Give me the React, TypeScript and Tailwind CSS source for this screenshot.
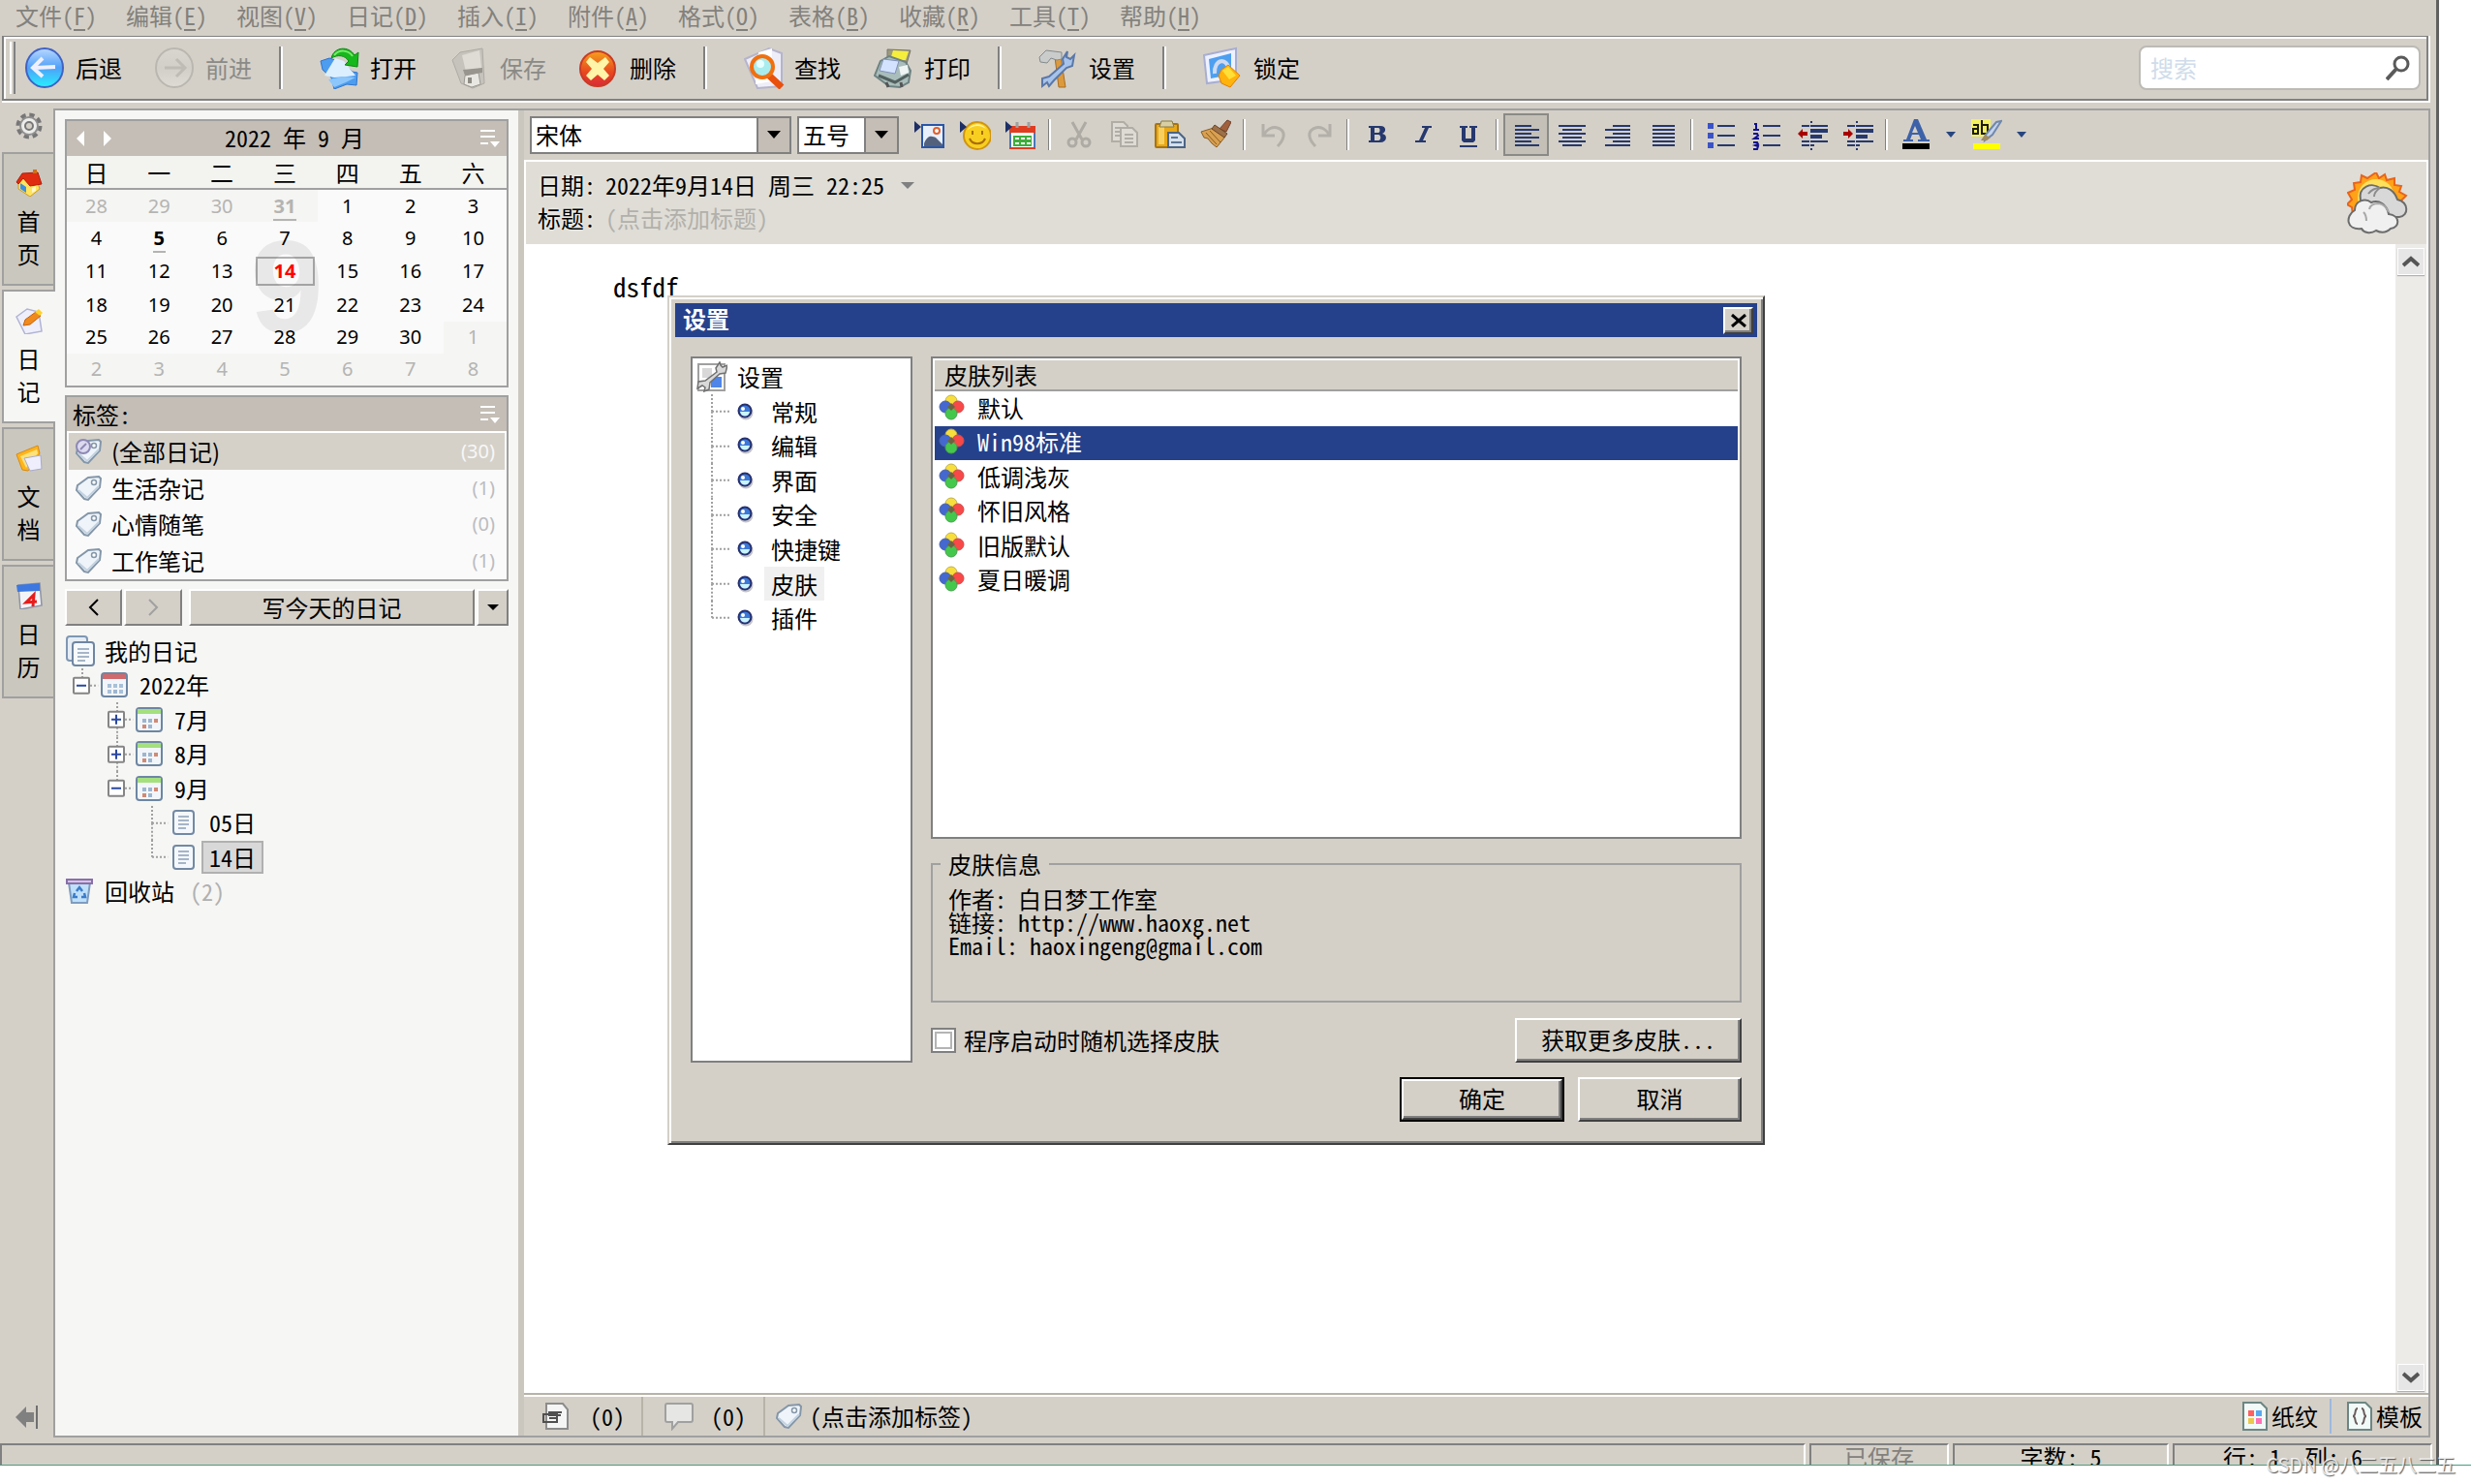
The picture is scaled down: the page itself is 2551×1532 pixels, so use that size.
import { useState } from "react";
import type { ReactNode } from "react";
import clsx from "clsx";

const MENUS = [
  ["文件", "F"],
  ["编辑", "E"],
  ["视图", "V"],
  ["日记", "D"],
  ["插入", "I"],
  ["附件", "A"],
  ["格式", "O"],
  ["表格", "B"],
  ["收藏", "R"],
  ["工具", "T"],
  ["帮助", "H"],
];

const WEEKDAYS = ["日", "一", "二", "三", "四", "五", "六"];

const WEEKS = [
  [28, 29, 30, 31, 1, 2, 3],
  [4, 5, 6, 7, 8, 9, 10],
  [11, 12, 13, 14, 15, 16, 17],
  [18, 19, 20, 21, 22, 23, 24],
  [25, 26, 27, 28, 29, 30, 1],
  [2, 3, 4, 5, 6, 7, 8],
];

const TAGS = [
  { name: "(全部日记)", count: 30 },
  { name: "生活杂记", count: 1 },
  { name: "心情随笔", count: 0 },
  { name: "工作笔记", count: 1 },
];

const PAGES = ["常规", "编辑", "界面", "安全", "快捷键", "皮肤", "插件"];
const SKINS = ["默认", "Win98标准", "低调浅灰", "怀旧风格", "旧版默认", "夏日暖调"];

/* ---------- toolbar icons ---------- */

function RoundArrowIcon({ back }: { back?: boolean }) {
  return (
    <svg viewBox="0 0 44 44" className="size-11">
      <defs>
        <linearGradient id={back ? "rb" : "rf"} x1="0" y1="0" x2="0" y2="1">
          <stop offset="0" stopColor={back ? "#b9d8ff" : "#d9d6cf"} />
          <stop offset="0.5" stopColor={back ? "#4fa0f8" : "#d2cfc8"} />
          <stop offset="1" stopColor={back ? "#25f0ff" : "#dedbd4"} />
        </linearGradient>
      </defs>
      <ellipse cx="20" cy="22" rx="19" ry="20" fill={`url(#${back ? "rb" : "rf"})`} stroke={back ? "#3f62c4" : "#bab7b0"} strokeWidth="2" />
      {back ? (
        <path d="M31 21l-21 1M18 12L8 22l10 9" fill="none" stroke="#eef0ff" strokeWidth="4" />
      ) : (
        <path d="M10 22h20M22 13l9 9-9 9" fill="none" stroke="#bfbcb5" strokeWidth="3" />
      )}
    </svg>
  );
}

function OpenIcon() {
  return (
    <svg viewBox="0 0 44 44" className="size-11">
      <path d="M1 15l9-3 6 2 9 3 9 9 5 1-1 13-10-1-13 5-3-12-9-8z" fill="#4c9df0" stroke="#2f74cc" />
      <path d="M5 30l11-18 9 3 12 15-9 1-13 1z" fill="#dcefff" />
      <path d="M9 34l16-3 12 1-10 5-12 5z" fill="#8cc6fb" />
      <path d="M12 12C15 0 30-1 36 9l4-3-1 15-13-2 4-4c-4-6-11-7-18-3z" fill="#16b81c" stroke="#0b8a10" />
      <path d="M15 9c5-6 14-6 19 1" fill="none" stroke="#7bea6d" strokeWidth="2" />
    </svg>
  );
}

function SaveIcon() {
  return (
    <svg viewBox="0 0 44 44" className="size-11">
      <path d="M3 14L11 6l23-4 2 36-12 5-12-5z" fill="#c6c3bc" stroke="#aeaba4" />
      <path d="M13 9l18-5 2 18-16 4z" fill="#dfdcd6" />
      <path d="M16 30l14-3 2 12-9 3-8-3z" fill="#e9e7e2" stroke="#9d9a94" />
      <path d="M14 24l20-2v5l-18 3z" fill="#98958f" />
      <path d="M19 32h4v6h-4z" fill="#8f8c86" />
    </svg>
  );
}

function DeleteIcon() {
  return (
    <svg viewBox="0 0 44 44" className="size-11">
      <defs>
        <linearGradient id="del" x1="0" y1="0" x2="0" y2="1">
          <stop offset="0" stopColor="#f5a01c" />
          <stop offset="0.6" stopColor="#e8471f" />
          <stop offset="1" stopColor="#d92a3a" />
        </linearGradient>
      </defs>
      <circle cx="19" cy="23" r="18" fill="url(#del)" stroke="#c93b24" strokeWidth="2" />
      <path d="M11 11l8 6 8-6 4 5-6 7 6 7-5 5-7-6-7 6-5-5 6-7-6-7z" fill="#fff4a8" />
    </svg>
  );
}

function FindIcon() {
  return (
    <svg viewBox="0 0 44 44" className="size-11">
      <path d="M1 13L26 2l13 5v34l-25 2z" fill="#eeeef8" stroke="#b5b4cc" strokeWidth="2" />
      <path d="M15 6l14-4-1 34-16 3z" fill="#fff" />
      <path d="M26 30l13 12" stroke="#e8500c" strokeWidth="7" />
      <circle cx="19" cy="21" r="11" fill="#a9ecee" stroke="#f07010" strokeWidth="4" />
      <circle cx="17" cy="18" r="4" fill="#e8ffff" />
    </svg>
  );
}

function PrintIcon() {
  return (
    <svg viewBox="0 0 44 44" className="size-11">
      <path d="M14 3l24 1-4 14-20-3z" fill="#9c9a7c" stroke="#77766a" />
      <path d="M20 4l16 1-3 9H17z" fill="#f5ee3c" />
      <path d="M7 15l9-5 17 6 5 9-2 12-9 5-11-1L1 30z" fill="#a9bdbb" stroke="#6d8280" strokeWidth="2" />
      <path d="M10 13l16 2-4 13-16-3z" fill="#d3e2ff" stroke="#8290b8" />
      <path d="M5 30l17 7 14-8" fill="none" stroke="#52615f" strokeWidth="3" />
      <path d="M26 21l9-2 1 8-8 3z" fill="#eef5f4" />
      <path d="M13 37l2 5M28 37l1 5" stroke="#555" strokeWidth="3" />
    </svg>
  );
}

function ToolsIcon() {
  return (
    <svg viewBox="0 0 44 44" className="size-11">
      <path d="M17 11l6-1 5 32h-7z" fill="#dc9a3e" stroke="#a86c22" />
      <path d="M1 11l7-7 16 2v7l-5 1-6-2-4 5-7-1z" fill="#c9cccb" stroke="#858a8b" />
      <path d="M30 5l-5 8 1 5-15 13-7 2v8l5-4 2 4 5-6 13-13 6-2 2-11-4 4-4-2z" fill="#a8c3ea" stroke="#5b78a8" strokeWidth="2" />
    </svg>
  );
}

function LockIcon() {
  return (
    <svg viewBox="0 0 44 44" className="size-11">
      <path d="M1 9l33-7v32L4 38z" fill="#eef1ff" stroke="#a8aed0" strokeWidth="2" />
      <path d="M6 13l23-6v22L8 33z" fill="#4e9ff0" />
      <path d="M12 28c-1-15 13-18 15-3" fill="none" stroke="#cfdaf2" strokeWidth="4" />
      <path d="M19 24l7-5 12 11-10 12-9-4-3-8z" fill="#ffb30c" stroke="#e07f08" />
      <path d="M20 25l6-4 8 9-7 4z" fill="#ffdf38" />
    </svg>
  );
}

/* ---------- side bar icons ---------- */

function GearIcon() {
  return (
    <svg viewBox="0 0 28 28" className="size-7">
      <circle cx="14" cy="14" r="11" fill="none" stroke="#777" strokeWidth="5" strokeDasharray="5 3.64" />
      <circle cx="14" cy="14" r="9" fill="#ececea" stroke="#909090" strokeWidth="2" />
      <circle cx="14" cy="14" r="4" fill="#d4d0c8" stroke="#777" strokeWidth="2" />
    </svg>
  );
}

function HomeIcon() {
  return (
    <svg viewBox="0 0 28 28" className="size-7">
      <path d="M3 14l6-6 14 6 2 6-10 8-12-8z" fill="#ffe45c" stroke="#d09a28" />
      <path d="M5 14l6 4v6l-6-4z" fill="#3c8fe0" />
      <path d="M17 19l4-2v5l-4 2z" fill="#fff6c8" />
      <path d="M1 13L7 4l16-1 4 12-12 2-7-8-5 6z" fill="#e02c10" stroke="#b51c08" />
      <path d="M18 4V0h4v4z" fill="#d07018" />
    </svg>
  );
}

function DiaryIcon() {
  return (
    <svg viewBox="0 0 28 28" className="size-7">
      <path d="M1 10L12 2l12 3 3 20-17 3z" fill="#eeeffb" stroke="#b0b4d4" strokeWidth="1.5" />
      <path d="M8 19l2-6L21 5l5 4-11 9z" fill="#f08a1c" stroke="#c8600c" />
      <path d="M20 5l4-3 4 4-3 3z" fill="#ffd22c" />
    </svg>
  );
}

function DocsIcon() {
  return (
    <svg viewBox="0 0 28 28" className="size-7">
      <path d="M1 10L23 1l2 8-12 18-6-1z" fill="#ffb41c" stroke="#d88a10" />
      <path d="M5 12l17-7 1 4-12 15z" fill="#ffe27a" />
      <path d="M9 14l17-3 1 14-12 2z" fill="#eeeefc" stroke="#a9aace" />
    </svg>
  );
}

function DateIcon() {
  return (
    <svg viewBox="0 0 28 28" className="size-7">
      <path d="M3 3l22-2 2 23-22 4z" fill="#f4f4f8" stroke="#8d94a6" strokeWidth="1.5" />
      <path d="M1 3l24-2v8L2 10z" fill="#3c78e0" />
      <path d="M18 25l1-12-8 8 11-1" fill="none" stroke="#e81c1c" strokeWidth="3" />
    </svg>
  );
}

/* ---------- panel icons ---------- */

function MenuLinesIcon() {
  return (
    <svg viewBox="0 0 22 20" className="h-5 w-[22px]">
      <path d="M1 2h15M1 8h15M1 15h8" stroke="#fff" strokeWidth="2" />
      <path d="M11 13h10l-5 6z" fill="#fff" />
    </svg>
  );
}

function TagIcon({ all }: { all?: boolean }) {
  return (
    <svg viewBox="0 0 28 28" className="size-7 shrink-0">
      <path d="M3 11L14 3l11-1 2 2-1 9-12 13-4-1-8-9z" fill="#eef4fa" stroke="#8496a8" strokeWidth="2" />
      <path d="M4 16l9 8 12-12" fill="none" stroke="#c3d2e0" strokeWidth="2" />
      <circle cx="20" cy="8" r="2.5" fill="#fff" stroke="#8496a8" strokeWidth="1.5" />
      {all && (
        <>
          <circle cx="9" cy="9" r="7" fill="#dcdaf0" stroke="#8d88b4" strokeWidth="2" />
          <path d="M6 12l6-6" fill="none" stroke="#8d88b4" strokeWidth="2" />
        </>
      )}
    </svg>
  );
}

function BookIcon() {
  return (
    <svg viewBox="0 0 30 32" className="h-8 w-[30px]">
      <rect x="1" y="1" width="21" height="25" rx="3" fill="#e6edf5" stroke="#7e97b3" strokeWidth="2" />
      <rect x="7" y="7" width="22" height="24" rx="3" fill="#f7fafd" stroke="#6f86a2" strokeWidth="2" />
      <path d="M12 14h12M12 18h12M12 22h12M12 26h8" stroke="#8c9fb5" strokeWidth="1.5" />
    </svg>
  );
}

function CalendarIcon({ year }: { year?: boolean }) {
  return (
    <svg viewBox="0 0 28 28" className="size-7">
      <rect x="1" y="2" width="26" height="24" rx="3" fill="#f2f6fa" stroke="#6d86a2" strokeWidth="2" />
      <path d="M2 3h24v5H2z" fill={year ? "#d06a6c" : "#a4e07e"} />
      <path d="M7 13h4v4H7zM13 13h4v4h-4zM7 19h4v4H7z" fill={year ? "#a9c0d8" : "#9db6d0"} />
      <path d="M19 13h4v4h-4z" fill={year ? "#a9c0d8" : "#d08a74"} />
      <path d="M13 19h4v4h-4z" fill="#9db6d0" />
      {year ? <path d="M19 19h4v4h-4z" fill="#a9c0d8" /> : <path d="M7 19h4v4H7z" fill="#d08a74" />}
    </svg>
  );
}

function NoteIcon() {
  return (
    <svg viewBox="0 0 28 28" className="size-7">
      <rect x="3" y="2" width="21" height="24" rx="3" fill="#f4f8fc" stroke="#7289a4" strokeWidth="2" />
      <path d="M8 8h11M8 12h11M8 16h11M8 20h8" stroke="#8c9fb5" strokeWidth="1.5" />
    </svg>
  );
}

function BinIcon() {
  return (
    <svg viewBox="0 0 28 28" className="size-7">
      <path d="M3 5h22l-3 21H6z" fill="#bfe0fa" stroke="#7f9cc0" strokeWidth="2" />
      <path d="M1 2h26v4H1z" fill="#d6c4e8" stroke="#8870a8" strokeWidth="2" />
      <path d="M11 14l3-4 3 4M19 16l1 4h-4M12 20H8l1-4" fill="none" stroke="#3c7cc8" strokeWidth="2.5" />
    </svg>
  );
}

/* Guide lines of a tree view, with an optional expander box. */
function TreeCell({ up = true, down, sign, wide }: { up?: boolean; down?: boolean; sign?: "+" | "-"; wide?: boolean }) {
  return (
    <svg className={clsx("h-full shrink-0", wide ? "w-10" : "w-9")}>
      <g stroke="#a0a0a0" strokeWidth="2" strokeDasharray="2 2">
        {up && <line x1="50%" y1="0" x2="50%" y2="50%" />}
        {down && <line x1="50%" y1="50%" x2="50%" y2="100%" />}
        <line x1="50%" y1="50%" x2="95%" y2="50%" />
      </g>
      {sign && (
        <svg x="50%" y="50%" overflow="visible">
          <rect x="-9" y="-8" width="16" height="16" rx="1" fill="#fff" stroke="#858585" strokeWidth="2" />
          <path d={sign === "+" ? "M-6 0H4M-1-5V5" : "M-6 0H4"} stroke="#2a48a0" strokeWidth="2" />
        </svg>
      )}
    </svg>
  );
}

/* ---------- main tool bar ---------- */

function ToolButton({ icon, label, disabled }: { icon: ReactNode; label: string; disabled?: boolean }) {
  return (
    <button disabled={disabled} className={clsx("flex h-12 w-[134px] items-center gap-2 pl-2.5", disabled && "text-[#8a8a86]")}>
      {icon}
      <span>{label}</span>
    </button>
  );
}

function ToolSeparator() {
  return <div className="mr-7 ml-1 h-11 w-1 border-r-2 border-l-2 border-r-white border-l-[#808080]" />;
}

function MainToolbar() {
  return (
    <div className="mr-1.5 ml-0.5 border-r-2 border-b-2 border-white">
      <div className="flex h-[67px] items-center border-2 border-t border-[#808080] shadow-[inset_2px_2px_0_#fff]">
        <div className="ml-1.5 h-[54px] w-1.5 border-r-2 border-l-2 border-r-[#808080] border-l-white" />
        <ToolButton icon={<RoundArrowIcon back />} label="后退" />
        <ToolButton icon={<RoundArrowIcon />} label="前进" disabled />
        <ToolSeparator />
        <ToolButton icon={<OpenIcon />} label="打开" />
        <ToolButton icon={<SaveIcon />} label="保存" disabled />
        <ToolButton icon={<DeleteIcon />} label="删除" />
        <ToolSeparator />
        <ToolButton icon={<FindIcon />} label="查找" />
        <ToolButton icon={<PrintIcon />} label="打印" />
        <ToolSeparator />
        <ToolButton icon={<ToolsIcon />} label="设置" />
        <ToolSeparator />
        <ToolButton icon={<LockIcon />} label="锁定" />
        <label className="mr-1.5 ml-auto flex h-[46px] w-[291px] items-center rounded-lg border-2 border-[#bcbab5] bg-white pr-2 pl-2.5">
          <input aria-label="搜索" placeholder="搜索" className="min-w-0 flex-1 outline-none placeholder:text-[#cfdcea]" />
          <svg viewBox="0 0 26 26" className="size-[26px]">
            <circle cx="16" cy="9" r="7" fill="none" stroke="#5a5a5a" strokeWidth="3" />
            <path d="M11 14L1 25" stroke="#5a5a5a" strokeWidth="4" />
          </svg>
        </label>
      </div>
    </div>
  );
}

/* ---------- left side ---------- */

function SideTab({ icon, label, active, onClick }: { icon: ReactNode; label: string; active: boolean; onClick: () => void }) {
  return (
    <button
      onClick={onClick}
      className={clsx(
        "ml-0.5 flex h-[138px] flex-col items-center border-2 border-r-0 border-[#a0a0a0] pt-4",
        active ? "relative z-10 -mr-0.5 bg-[#f6f6f4] pr-0.5" : "bg-[#cac7be]"
      )}
    >
      {icon}
      <span className="mt-2 w-6 leading-[34px] break-all">{label}</span>
    </button>
  );
}

function SideTabs() {
  const [active, setActive] = useState("日记");
  const tabs = [
    { label: "首页", icon: <HomeIcon /> },
    { label: "日记", icon: <DiaryIcon /> },
    { label: "文档", icon: <DocsIcon /> },
    { label: "日历", icon: <DateIcon /> },
  ];
  return (
    <nav className="flex w-[55px] shrink-0 flex-col">
      <button aria-label="选项" className="flex h-[45px] items-start justify-center pt-1 pl-1">
        <GearIcon />
      </button>
      <div className="flex flex-col gap-1">
        {tabs.map((tab) => (
          <SideTab key={tab.label} {...tab} active={tab.label === active} onClick={() => setActive(tab.label)} />
        ))}
      </div>
      <button aria-label="收起" className="mt-auto mb-2 ml-4 w-6">
        <svg viewBox="0 0 24 26" className="h-[26px] w-6">
          <path d="M0 13L11 2v6h8v10h-8v6z" fill="#808080" />
          <path d="M22 1v24" stroke="#707070" strokeWidth="2" />
        </svg>
      </button>
    </nav>
  );
}

function MonthCalendar() {
  return (
    <section className="border-2 border-[#a0a0a0] bg-[#fafafa]">
      <div className="flex h-9 items-center justify-between bg-[#c4beb6] pr-1.5 pl-2.5">
        <div className="flex w-10 gap-5">
          <button aria-label="上个月" className="border-y-8 border-r-8 border-y-transparent border-r-white" />
          <button aria-label="下个月" className="border-y-8 border-l-8 border-y-transparent border-l-white" />
        </div>
        <span className="pb-0.5 pl-3 whitespace-pre">2022 年 9 月</span>
        <button aria-label="日历菜单" className="flex w-10 justify-end">
          <MenuLinesIcon />
        </button>
      </div>
      <div className="relative">
        <table className="h-[237px] w-full table-fixed border-collapse text-center">
          <thead>
            <tr className="h-[34px] border-b-2 border-[#a0a0a0] bg-[#f3f3f0]">
              {WEEKDAYS.map((d) => (
                <th key={d} className="p-0 pr-1 leading-8 font-normal">{d}</th>
              ))}
            </tr>
          </thead>
          <tbody className="font-[family-name:'Noto_Sans',sans-serif] text-[20px] leading-7">
            {WEEKS.map((week, w) => (
              <tr key={w}>
                {week.map((day, i) => {
                  const other = (w === 0 && day > 20) || (w > 3 && day < 15);
                  const written = (w === 0 && day === 31) || (w === 1 && day === 5);
                  const today = w === 2 && day === 14;
                  return (
                    <td key={i} className={clsx("p-0 pr-1", other && "bg-[#f5f5f3] text-[#b4b4b2]")}>
                      <span
                        className={clsx(
                          written && "border-b-2 border-[#b4b4b2] px-px font-bold",
                          today && "mx-auto block h-[30px] w-[61px] border-2 border-[#b0b0b0] leading-[26px] font-bold text-[#f00]"
                        )}
                      >
                        {day}
                      </span>
                    </td>
                  );
                })}
              </tr>
            ))}
          </tbody>
        </table>
        <div
          aria-hidden
          className="pointer-events-none absolute inset-x-0 top-[80px] text-center font-[family-name:'Liberation_Sans',sans-serif] text-[136px] leading-[110px] font-bold text-black/7"
        >
          9
        </div>
      </div>
    </section>
  );
}

function TagList() {
  return (
    <section className="mt-2 border-2 border-[#a0a0a0] bg-[#fafafa]">
      <div className="flex h-[35px] items-center justify-between bg-[#c4beb6] pr-1.5 pl-1.5">
        <h2>标签:</h2>
        <button aria-label="标签菜单">
          <MenuLinesIcon />
        </button>
      </div>
      <ul className="grid h-[153px] grid-rows-4 border-t-2 border-white px-0.5">
        {TAGS.map((tag, i) => (
          <li key={tag.name} className={clsx("flex", i === 0 && "bg-[#d5d1c9]")}>
            <button className="flex flex-1 items-center gap-2.5 pr-2.5 pl-1.5 text-left">
              <TagIcon all={i === 0} />
              <span className="flex-1 font-[family-name:'Noto_Sans_CJK_SC',sans-serif]">{tag.name}</span>
              <span className={clsx("font-[family-name:'Noto_Sans',sans-serif] text-[20px]", i === 0 ? "text-[#f7f7f7]" : "text-[#bcbcc0]")}>
                ({tag.count})
              </span>
            </button>
          </li>
        ))}
      </ul>
    </section>
  );
}

function TreeItem({ cells, icon, label, selected, count }: { cells?: ReactNode; icon: ReactNode; label: string; selected?: boolean; count?: number }) {
  return (
    <li className="flex items-center">
      {cells}
      <span className="ml-px flex w-[30px] shrink-0 items-center">{icon}</span>
      <button className={clsx("ml-0.5 border-2 px-1.5 leading-[30px]", selected ? "border-[#b0b0b0] bg-[#d8d8d8]" : "border-transparent")}>{label}</button>
      {count !== undefined && <span className="ml-2 text-[#b0b0b0]">({count})</span>}
    </li>
  );
}

function DiaryTree() {
  const gap = <span className="w-9 shrink-0" />;
  return (
    <ul className="mt-2 grid h-[284px] grid-rows-8">
      <TreeItem icon={<BookIcon />} label="我的日记" />
      <TreeItem cells={<TreeCell sign="-" />} icon={<CalendarIcon year />} label="2022年" />
      <TreeItem cells={<>{gap}<TreeCell sign="+" down /></>} icon={<CalendarIcon />} label="7月" />
      <TreeItem cells={<>{gap}<TreeCell sign="+" down /></>} icon={<CalendarIcon />} label="8月" />
      <TreeItem cells={<>{gap}<TreeCell sign="-" /></>} icon={<CalendarIcon />} label="9月" />
      <TreeItem cells={<>{gap}{gap}<TreeCell down /></>} icon={<NoteIcon />} label="05日" />
      <TreeItem cells={<>{gap}{gap}<TreeCell /></>} icon={<NoteIcon />} label="14日" selected />
      <TreeItem icon={<BinIcon />} label="回收站" count={2} />
    </ul>
  );
}

function LeftPanel() {
  const btn = "flex items-center justify-center border-2 border-t-white border-r-[#808080] border-b-[#808080] border-l-white bg-[#d4d0c8]";
  return (
    <aside className="w-[478px] shrink-0 bg-[#f6f6f4] px-2.5 pt-[9px]">
      <MonthCalendar />
      <TagList />
      <div className="mt-2 flex h-[38px]">
        <button aria-label="前一篇" className={clsx(btn, "w-[59px]")}>
          <svg viewBox="0 0 12 18" className="h-[18px] w-3"><path d="M10 1L2 9l8 8" fill="none" stroke="#000" strokeWidth="2" /></svg>
        </button>
        <button aria-label="后一篇" className={clsx(btn, "ml-0.5 w-[60px]")}>
          <svg viewBox="0 0 12 18" className="h-[18px] w-3"><path d="M2 1l8 8-8 8" fill="none" stroke="#a0a0a0" strokeWidth="2" /></svg>
        </button>
        <button className={clsx(btn, "ml-[7px] flex-1")}>写今天的日记</button>
        <button aria-label="更多" className={clsx(btn, "ml-0.5 w-[33px]")}>
          <span className="border-x-[6px] border-t-[6px] border-x-transparent border-t-black" />
        </button>
      </div>
      <DiaryTree />
    </aside>
  );
}

/* ---------- editor ---------- */

function FormatSeparator() {
  return <div className="mx-[5px] h-8 w-[3px] border-r-2 border-l border-r-white border-l-[#808080]" />;
}

function FormatButton({ label, active, children }: { label: string; active?: boolean; children: ReactNode }) {
  return (
    <button
      aria-label={label}
      className={clsx("flex h-11 w-[47px] items-center justify-center", active && "border-2 border-[#8a8a86] bg-[#c4c0b8]")}
    >
      <svg viewBox="0 0 32 32" className="size-8 shrink-0">{children}</svg>
    </button>
  );
}

function DropArrow({ label }: { label: string }) {
  return (
    <button aria-label={label} className="flex h-11 w-[26px] items-center justify-center">
      <span className="border-x-[5px] border-t-[6px] border-x-transparent border-t-[#27457e]" />
    </button>
  );
}

function Combo({ label, value, className }: { label: string; value: string; className: string }) {
  return (
    <label className={clsx("flex h-[39px] border-2 border-[#808080] bg-white", className)}>
      <select aria-label={label} className="min-w-0 flex-1 appearance-none pl-1 outline-none">
        <option>{value}</option>
      </select>
      <span className="flex w-[34px] items-center justify-center border-l-2 border-[#808080] bg-[#c4beb6]">
        <span className="border-x-[7px] border-t-[8px] border-x-transparent border-t-black" />
      </span>
    </label>
  );
}

const flag = <path d="M0 2l7 6-7 6z" fill="#1e2f66" />;

function FormatBar() {
  return (
    <div className="flex h-[53px] items-center border-b-2 border-white pb-px pl-1.5">
      <Combo label="字体" value="宋体" className="w-[270px]" />
      <Combo label="字号" value="五号" className="mr-2 ml-1.5 w-[105px]" />
      <FormatButton label="图片">
        {flag}
        <rect x="8" y="6" width="22" height="23" fill="#e8f0fc" stroke="#2a56a8" strokeWidth="2" />
        <path d="M10 25c4-10 9-7 12-6l7 7v2H10z" fill="#54617c" />
        <circle cx="23" cy="12" r="3" fill="#fff" stroke="#e0602c" strokeWidth="2" />
      </FormatButton>
      <FormatButton label="表情">
        <circle cx="18" cy="17" r="14" fill="#f8cf20" stroke="#d09410" strokeWidth="2" />
        <path d="M8 11c4-7 15-8 19-1-6-4-13-4-19 1z" fill="#fff2a0" />
        <path d="M13 12v4M23 12v4" stroke="#a86c08" strokeWidth="2" />
        <path d="M10 20c3 7 13 7 16 0" fill="none" stroke="#a86c08" strokeWidth="2" />
        {flag}
      </FormatButton>
      <FormatButton label="日期">
        <rect x="5" y="8" width="25" height="22" fill="#fff" stroke="#4878b8" strokeWidth="2" />
        <path d="M4 7h27v7H4zM4 29h27v2H4z" fill="#e03c20" />
        <rect x="8" y="17" width="19" height="11" fill="#3fae3c" />
        <path d="M10 20h4m2 0h4m2 0h4M10 25h4m2 0h4m2 0h4" stroke="#fff" strokeWidth="2" />
        <path d="M12 3v6M24 3v6" stroke="#a0a0a0" strokeWidth="3" />
        {flag}
      </FormatButton>
      <FormatSeparator />
      <FormatButton label="剪切">
        <g fill="none" stroke="#aeaba4" strokeWidth="3">
          <path d="M9 3l10 18M23 3L13 21" />
          <circle cx="9" cy="24" r="4" />
          <circle cx="23" cy="24" r="4" />
        </g>
      </FormatButton>
      <FormatButton label="复制">
        <g fill="#dedbd5" stroke="#b0ada6" strokeWidth="2">
          <path d="M3 3h12l4 4v16H3z" />
          <path d="M12 9h12l5 5v14H12z" />
          <path d="M6 9h5M6 13h5M6 17h5M16 16h9M16 20h9M16 24h9" />
        </g>
      </FormatButton>
      <FormatButton label="粘贴">
        <rect x="1" y="5" width="23" height="24" rx="1" fill="#e8a818" stroke="#a87410" strokeWidth="2" />
        <path d="M4 8h6v18H4z" fill="#f8d060" />
        <path d="M7 2h11l2 6H5z" fill="#d8cfa4" stroke="#8a7a3c" />
        <path d="M14 14h11l6 6v9H14z" fill="#d5e0ec" stroke="#4c6484" strokeWidth="2" />
        <path d="M17 19h7M17 24h11" stroke="#5c7494" strokeWidth="2" />
      </FormatButton>
      <FormatButton label="格式刷">
        <path d="M20 10l8-9 4 2-5 10z" fill="#a0603c" stroke="#70402c" />
        <path d="M1 13l13-4 12 9-9 11-5-4-4-5-4-1z" fill="#d8a050" stroke="#8a5c24" />
        <path d="M6 14l11 12M10 12l11 12" stroke="#8a5c24" />
        <path d="M15 6l13 9-3 4-13-9z" fill="#9c7048" stroke="#6c4424" />
      </FormatButton>
      <FormatSeparator />
      <FormatButton label="撤销">
        <path d="M5 5v12h12M6 16C12 4 28 8 26 18c-1 5-4 8-6 10" fill="none" stroke="#b3b0a9" strokeWidth="3" />
      </FormatButton>
      <FormatButton label="重做">
        <path d="M27 5v12H15M26 16C20 4 4 8 6 18c1 5 4 8 6 10" fill="none" stroke="#b3b0a9" strokeWidth="3" />
      </FormatButton>
      <FormatSeparator />
      <FormatButton label="加粗">
        <path d="M7 7h12c7 0 6 7 2 8 6 1 5 9-2 9H7v-2h2V9H7zm6 2v5h4c2 0 2-5 0-5zm0 7v6h4c3 0 3-6 0-6z" fill="#26386e" fillRule="evenodd" />
      </FormatButton>
      <FormatButton label="斜体">
        <path d="M15 7h10v2h-3l-6 13h3v2H8v-2h4l6-13h-3z" fill="#26386e" />
      </FormatButton>
      <FormatButton label="下划线">
        <path d="M7 7h8v2h-2v11h6V9h-2V7h8v2h-2v13l-2 2H11l-2-2V9H7zM7 27h18v2H7z" fill="#26386e" />
      </FormatButton>
      <FormatSeparator />
      <FormatButton label="左对齐" active>
        <path d="M4 7h17M4 11h25M4 15h17M4 19h25M4 23h17M4 27h25" stroke="#26386e" strokeWidth="2" />
      </FormatButton>
      <FormatButton label="居中">
        <path d="M2 7h28M6 11h20M2 15h28M6 19h20M2 23h28M6 27h20" stroke="#26386e" strokeWidth="2" />
      </FormatButton>
      <FormatButton label="右对齐">
        <path d="M11 7h18M3 11h26M11 15h18M3 19h26M11 23h18M3 27h26" stroke="#26386e" strokeWidth="2" />
      </FormatButton>
      <FormatButton label="两端对齐">
        <path d="M5 7h23M5 11h23M5 15h23M5 19h23M5 23h23M5 27h23" stroke="#26386e" strokeWidth="2" />
      </FormatButton>
      <FormatSeparator />
      <FormatButton label="项目符号">
        <path d="M2 4h6v6H2zM2 14h6v6H2zM2 24h6v6H2z" fill="#3a52c8" />
        <path d="M12 7h18M12 17h18M12 27h18" stroke="#26386e" strokeWidth="2" />
      </FormatButton>
      <FormatButton label="编号">
        <path d="M3 5h2v6M2 11h6M2 15h4l1 2-4 3h5M2 24h4l1 2-3 1 3 1-1 3H2" fill="none" stroke="#10108c" strokeWidth="2" />
        <path d="M12 7h18M12 17h18M12 27h18" stroke="#26386e" strokeWidth="2" />
      </FormatButton>
      <FormatButton label="减少缩进">
        <path d="M5 7h8M14 7h18M5 23h8M14 23h18M5 27h8M14 27h4M14 3h2M14 31h2" stroke="#26386e" strokeWidth="2" />
        <path d="M14 10h18v4H14zM14 16h12v4H14z" fill="#26386e" />
        <path d="M1 15l5-5v3h5v4H6v3z" fill="#a80000" />
      </FormatButton>
      <FormatButton label="增加缩进">
        <path d="M5 7h8M14 7h18M5 23h8M14 23h18M5 27h8M14 27h4M14 3h2M14 31h2" stroke="#26386e" strokeWidth="2" />
        <path d="M14 10h18v4H14zM14 16h12v4H14z" fill="#26386e" />
        <path d="M11 15l-5-5v3H1v4h5v3z" fill="#a80000" />
      </FormatButton>
      <FormatSeparator />
      <FormatButton label="字体颜色">
        <path d="M14 0h4l9 21h3v2H18v-2h3l-2-5h-7l-2 5h3v2H3v-2h3zm1 7l-3 7h6z" fill="#3d62a8" fillRule="evenodd" />
        <path d="M2 25h28v6H2z" fill="#000" />
      </FormatButton>
      <DropArrow label="选择字体颜色" />
      <FormatButton label="突出显示">
        <path d="M0 0h20v18H0z" fill="#f2f060" />
        <g fill="none" stroke="#1c1c10" strokeWidth="2">
          <path d="M2 6h5v9H2v-5h5M11 1v14h6V6h-6" />
        </g>
        <path d="M31 2l-9 14-8 6 1-6L26 3z" fill="#c4d4ec" stroke="#7088ac" strokeWidth="2" />
        <path d="M10 22l4-6 6 3-4 3z" fill="#a08c60" />
        <path d="M2 25h28v6H2z" fill="#ff0" />
      </FormatButton>
      <DropArrow label="选择突出显示颜色" />
    </div>
  );
}

function WeatherIcon() {
  return (
    <svg viewBox="0 0 64 64" className="mt-1 size-16">
      <path
        d="M30 0l3 6 6-4 2 6 8-2v7l7 1-2 6 7 4-5 5 3 7H12l-6 8-1-8-5-3 5-5-4-7 7-3-1-7 7-1 1-7 6 3z"
        fill="#ffa218"
        stroke="#e8641c"
        strokeWidth="2"
      />
      <circle cx="30" cy="26" r="19" fill="#ffe05c" />
      <path d="M14 29c-3-15 12-19 20-13 8-2 15 3 18 12 12 3 12 17 2 18H20z" fill="#d8d8d8" stroke="#6c6c6c" strokeWidth="2" />
      <path d="M22 22c4-5 8-6 12-6M28 25c0-4 3-7 6-9" fill="none" stroke="#8c8c8c" strokeWidth="2" />
      <path d="M8 39c0-10 11-13 17-8 8-3 16 2 18 12 12 1 12 14 2 15-5 5-11 4-15 2-6 4-13 2-15-2-16 2-17-13-7-19z" fill="#f0f0f0" stroke="#6c6c6c" strokeWidth="2" />
      <path d="M23 38c1-5 5-6 10-6 5 1 8 4 10 9M20 50c0-4-1-7-3-9" fill="none" stroke="#a8a8a8" strokeWidth="2" />
    </svg>
  );
}

function ScrollButton({ up }: { up?: boolean }) {
  return (
    <button
      aria-label={up ? "向上滚动" : "向下滚动"}
      className="mx-0.5 flex h-7 items-center justify-center border border-white bg-[#e6e6e6] shadow-[0_1px_1px_#b0b0b0]"
    >
      <svg viewBox="0 0 18 12" className={clsx("h-3 w-[18px]", !up && "rotate-180")}>
        <path d="M1 10l8-7 8 7" fill="none" stroke="#555" strokeWidth="4" />
      </svg>
    </button>
  );
}

function Editor() {
  return (
    <main className="flex min-w-0 flex-1 flex-col">
      <FormatBar />
      <div className="flex flex-1 flex-col border-x-2 border-white bg-white">
        <div className="flex h-[85px] justify-between bg-[#dfddd6] pt-[7px] pr-[18px] pl-3 leading-[34px]">
          <div>
            <div className="flex gap-2.5">
              <span className="text-shadow-[0_0_3px_#fff]">日期:</span>
              <button className="flex items-center gap-[17px]">
                2022年9月14日 周三 22:25
                <span className="border-x-[7px] border-t-[7px] border-x-transparent border-t-[#808080]" />
              </button>
            </div>
            <label className="flex gap-2.5">
              <span className="text-shadow-[0_0_3px_#fff]">标题:</span>
              <input placeholder="(点击添加标题)" className="w-96 outline-none placeholder:text-[#b2b0ab]" />
            </label>
          </div>
          <WeatherIcon />
        </div>
        <div className="flex flex-1">
          <textarea aria-label="正文" defaultValue="dsfdf" className="flex-1 resize-none bg-white pt-[26px] pl-[90px] text-[27px] leading-9 outline-none" />
          <div className="flex w-8 flex-col justify-between bg-[#ecebe8] pt-1 pb-0.5">
            <ScrollButton up />
            <ScrollButton />
          </div>
        </div>
      </div>
      <div className="border-t-2 border-[#b8b3a8]">
        <div className="flex h-[42px] items-stretch border-t-2 border-white">
          <button className="flex w-[123px] items-center border-r-2 border-[#b8b3a8] pl-[18px]">
            <svg viewBox="0 0 30 30" className="size-[30px]">
              <path d="M5 2h17l5 6v20H5z" fill="#f5f5f5" stroke="#8c8c8c" strokeWidth="2" />
              <path d="M21 11H8v3h12M2 13h14v8H2zM8 17h8" fill="none" stroke="#505050" strokeWidth="2" />
            </svg>
            <span className="ml-5">(0)</span>
          </button>
          <button className="flex w-[126px] items-center border-r-2 border-[#b8b3a8] pl-[22px]">
            <svg viewBox="0 0 30 30" className="size-[30px]">
              <path d="M3 2h24a2 2 0 012 2v15a2 2 0 01-2 2H14l-6 7v-7H3a2 2 0 01-2-2V4a2 2 0 012-2z" fill="#e6e6e4" stroke="#a0a0a0" strokeWidth="2" />
            </svg>
            <span className="ml-[18px]">(0)</span>
          </button>
          <button className="flex items-center gap-2 pl-2.5">
            <TagIcon />
            (点击添加标签)
          </button>
          <button className="ml-auto flex items-center gap-1 pr-3">
            <svg viewBox="0 0 26 30" className="h-[30px] w-[26px]">
              <path d="M1 1h18l6 6v22H1z" fill="#f2faf8" stroke="#6d8683" strokeWidth="2" />
              <path d="M6 9h6v6H6z" fill="#ff6060" />
              <path d="M14 9h6v6h-6z" fill="#58aaf0" />
              <path d="M6 17h6v6H6z" fill="#ecc84c" />
              <path d="M14 17h6v6h-6z" fill="#ff70b4" />
            </svg>
            纸纹
          </button>
          <div className="my-0.5 w-0.5 bg-[#9db9dd]" />
          <button className="flex items-center gap-1 pr-1.5 pl-4">
            <svg viewBox="0 0 26 30" className="h-[30px] w-[26px]">
              <path d="M1 1h18l6 6v22H1z" fill="#f2faf8" stroke="#6d8683" strokeWidth="2" />
              <path d="M11 7C7 7 10 15 6 15c4 0 1 8 5 8M15 7c4 0 1 8 5 8-4 0-1 8-5 8" fill="none" stroke="#6c5c5c" strokeWidth="2" />
            </svg>
            模板
          </button>
        </div>
      </div>
    </main>
  );
}

/* ---------- settings dialog ---------- */

function SkinIcon() {
  return (
    <svg viewBox="0 0 28 28" className="size-7">
      <circle cx="13" cy="7" r="6" fill="#f8de3c" stroke="#c0b048" />
      <circle cx="7" cy="13" r="6" fill="#4468d0" stroke="#4a64a8" />
      <circle cx="20" cy="13" r="6" fill="#f84848" stroke="#c85050" />
      <circle cx="13" cy="20" r="6" fill="#44c84c" stroke="#48a050" />
      <path d="M13 9l4 4-4 4-4-4z" fill="#6c6440" />
    </svg>
  );
}

function SettingsDialog() {
  const [page, setPage] = useState("皮肤");
  const [skin, setSkin] = useState("Win98标准");
  const btn =
    "flex h-[46px] items-center justify-center border-2 border-t-white border-r-[#404040] border-b-[#404040] border-l-white shadow-[inset_-2px_-2px_0_#808080]";
  return (
    <div
      role="dialog"
      aria-label="设置"
      className="absolute top-[305px] left-[689px] z-20 h-[877px] w-[1133px] border-2 border-t-[#d4d0c8] border-r-[#404040] border-b-[#404040] border-l-[#d4d0c8] bg-[#d4d0c8] p-1.5 shadow-[inset_2px_2px_0_#fff,inset_-2px_-2px_0_#808080]"
    >
      <div className="flex h-[35px] items-center justify-between bg-[#26418b] pr-1 pl-2 text-white">
        <h1 className="pb-1 font-bold">设置</h1>
        <button
          aria-label="关闭"
          className="flex h-7 w-[31px] items-center justify-center border-2 border-t-white border-r-[#404040] border-b-[#404040] border-l-white bg-[#d4d0c8] shadow-[inset_-2px_-2px_0_#808080]"
        >
          <svg viewBox="0 0 16 14" className="h-3.5 w-4">
            <path d="M1 1l14 12M15 1L1 13" stroke="#000" strokeWidth="3" />
          </svg>
        </button>
      </div>
      <div className="flex gap-[19px] px-4 pt-5">
        <div className="h-[729px] w-[229px] border-2 border-[#808080] bg-white">
          <div className="flex h-[37px] items-center gap-2.5 pl-1">
            <svg viewBox="0 0 32 32" className="size-8">
              <rect x="2" y="3" width="27" height="27" fill="#fff" stroke="#a0a0a0" strokeWidth="2" />
              <rect x="6" y="7" width="10" height="10" fill="#d8d8d8" />
              <rect x="15" y="16" width="11" height="11" fill="#4f86e8" />
              <path d="M24 1l-4 6 1 4L9 20l-7 1-1 7 5-3 3 2-1 4 5-2 1-7 10-9 6-1 2-8-5 2-2-2z" fill="#d9d9d9" stroke="#707070" strokeWidth="1.5" />
            </svg>
            设置
          </div>
          <ul className="grid h-[249px] grid-rows-7">
            {PAGES.map((name, i) => (
              <li key={name} className="flex">
                <TreeCell wide down={i < PAGES.length - 1} />
                <button onClick={() => setPage(name)} className="flex items-center">
                  <svg viewBox="0 0 18 18" className="ml-1.5 size-[18px]">
                    <circle cx="9" cy="10" r="7.5" fill="#c4c4cc" />
                    <circle cx="8" cy="8" r="6.5" fill="#3c78d8" stroke="#28306c" strokeWidth="2" />
                    <path d="M3 9h10c-1 6-9 6-10 0z" fill="#c9f4ff" />
                    <circle cx="6" cy="6" r="2" fill="#fff" />
                  </svg>
                  <span className={clsx("ml-2.5 flex h-full items-center px-[7px]", name === page && "bg-[#f0f0f0]")}>{name}</span>
                </button>
              </li>
            ))}
          </ul>
        </div>
        <div className="flex-1">
          <div className="h-[498px] border-2 border-[#808080] bg-white p-0.5">
            <div className="flex h-8 items-center border-b-2 border-[#a0a0a0] bg-[#d4d0c8] pl-2.5">皮肤列表</div>
            <ul className="grid h-[213px] grid-rows-6">
              {SKINS.map((name) => (
                <li key={name} className={clsx("flex", name === skin && "bg-[#26418b] text-white")}>
                  <button onClick={() => setSkin(name)} className="flex flex-1 items-center gap-3 pb-0.5 pl-1">
                    <SkinIcon />
                    {name}
                  </button>
                </li>
              ))}
            </ul>
          </div>
          <fieldset className="mt-3.5 h-[155px] border-2 border-[#a0a0a0] pl-2">
            <legend className="px-2 leading-6">皮肤信息</legend>
            <p className="pt-3 pl-2 leading-6">
              作者: 白日梦工作室
              <br />
              链接: http://www.haoxg.net
              <br />
              Email: haoxingeng@gmail.com
            </p>
          </fieldset>
          <div className="mt-4 flex items-center justify-between">
            <label className="flex items-center gap-2">
              <input type="checkbox" className="size-[26px] appearance-none border-2 border-[#808080] bg-white shadow-[inset_0_0_0_2px_#fff,inset_0_0_0_4px_#b4b4b4] checked:bg-[#808080]" />
              程序启动时随机选择皮肤
            </label>
            <button className={clsx(btn, "w-[234px] pb-0.5")}>获取更多皮肤...</button>
          </div>
          <div className="mt-[15px] flex justify-end gap-3.5">
            <button className="flex h-[46px] w-[170px] border-2 border-black">
              <span className="flex h-full flex-1 items-center justify-center border-2 border-t-white border-r-[#404040] border-b-[#404040] border-l-white pb-0.5 shadow-[inset_-2px_-2px_0_#808080]">
                确定
              </span>
            </button>
            <button className={clsx(btn, "w-[169px] pb-0.5")}>取消</button>
          </div>
        </div>
      </div>
    </div>
  );
}

function StatusPane({ children, className }: { children?: ReactNode; className: string }) {
  return (
    <div className={clsx("h-10 shrink-0 border-2 border-t-[#808080] border-r-white border-b-white border-l-[#808080] text-center leading-6 whitespace-pre", className)}>
      {children}
    </div>
  );
}

export default function App() {
  return (
    <div className="relative flex min-h-screen flex-col bg-white font-[family-name:'Noto_Sans_Mono_CJK_SC','Noto_Sans_CJK_SC',monospace] text-[24px] leading-7 text-black">
      <div className="relative mr-[33px] flex flex-1 flex-col border-r-[3px] border-[#606060] bg-[#d4d0c8]">
        <div className="flex h-[37px] items-center gap-[30px] pb-1.5 pl-4 text-[#83817c]">
          {MENUS.map(([name, key]) => (
            <button key={key} className="leading-[30px]">
              {name}(<u className="underline-offset-4">{key}</u>)
            </button>
          ))}
        </div>
        <MainToolbar />
        <div className="mt-1.5 flex flex-1">
          <SideTabs />
          <div className="mr-1.5 flex min-w-0 flex-1 border-2 border-[#a0a0a0]">
            <LeftPanel />
            <div className="w-1.5 shrink-0 bg-[#cac7be]" />
            <Editor />
          </div>
        </div>
        <footer className="mt-1.5 flex h-[22px] gap-1 overflow-hidden pr-1">
          <StatusPane className="flex-1" />
          <StatusPane className="w-[144px] text-[#83817c]">已保存</StatusPane>
          <StatusPane className="w-[223px]">字数: 5</StatusPane>
          <StatusPane className="w-[268px] pr-5">行: 1  列: 6</StatusPane>
        </footer>
        <SettingsDialog />
      </div>
      <div className="h-px bg-[#4a9c80]" />
      <div className="h-[19px]" />
      <div className="absolute right-4 bottom-1.5 z-30 font-[family-name:'Noto_Sans_CJK_SC',sans-serif] text-[20px] text-white/80 text-shadow-[1px_1px_1px_#555]">
        CSDN @八二五八二五
      </div>
    </div>
  );
}
